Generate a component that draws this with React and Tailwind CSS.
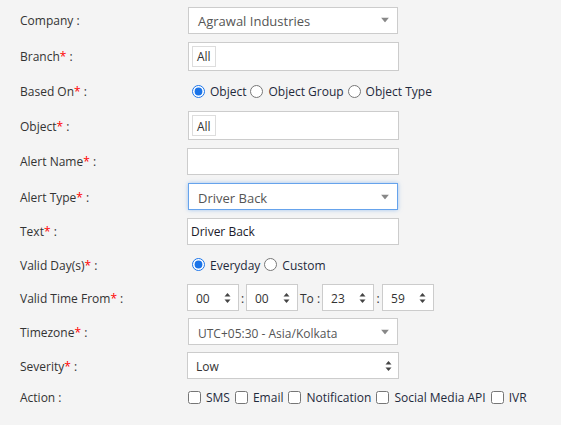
import React from "react";

const Star = () => <span className="text-[#ff0000]">*</span>;

function Caret() {
  return (
    <svg width="8" height="5" viewBox="0 0 8 5" className="absolute right-[8px] top-1/2 -translate-y-1/2">
      <path d="M0 0 L8 0 L4 5 Z" fill="#888" />
    </svg>
  );
}

function Spinner({ right = 8 }) {
  return (
    <svg width="7" height="11" viewBox="0 0 7 11" className="absolute top-1/2 -translate-y-1/2" style={{ right }}>
      <path d="M0.5 4 L3.5 0.5 L6.5 4 Z" fill="#444" />
      <path d="M0.5 7 L3.5 10.5 L6.5 7 Z" fill="#444" />
    </svg>
  );
}

function Row({ h, label, children }) {
  return (
    <div className="flex items-center" style={{ height: h }}>
      <div className="w-[167px] shrink-0 text-[#333] translate-y-[1px]">{label}</div>
      {children}
    </div>
  );
}

function SelectBox({ text, focused, extra = "" }) {
  return (
    <div
      className={`relative w-[210px] h-[27px] bg-white flex items-center pl-[9px] text-[#555] ${
        focused ? "border border-[#66a3ec] shadow-[0_0_4px_rgba(102,163,236,0.6)]" : "border border-[#cccccc]"
      } ${extra}`}
    >
      <span className="translate-y-[1.5px]">{text}</span>
      <Caret />
    </div>
  );
}

function TagBox() {
  return (
    <div className="w-[211px] h-[29px] bg-white border border-[#cccccc] flex items-center pl-[3px]">
      <span className="h-[21px] px-[4px] border border-[#dddddd] flex items-center text-[#333]">
        <span className="translate-y-[1px]">All</span>
      </span>
    </div>
  );
}

function Radio({ checked, label }) {
  return (
    <label className="flex items-center gap-[5px]">
      <input type="radio" readOnly checked={checked} className="w-[13px] h-[13px] m-0 accent-[#1a73e8]" />
      <span className="text-[#1f2a3c] translate-y-[1px]">{label}</span>
    </label>
  );
}

function Check({ label }) {
  return (
    <label className="flex items-center gap-[5px]">
      <input type="checkbox" readOnly className="w-[13px] h-[13px] m-0" />
      <span className="text-[#1f2a3c] translate-y-[1px]">{label}</span>
    </label>
  );
}

function TimeBox({ v }) {
  return (
    <div className="relative w-[52px] h-[27px] bg-white border border-[#cccccc] flex items-center pl-[8px] text-[#333]">
      <span className="translate-y-[1px]">{v}</span>
      <Spinner right={7} />
    </div>
  );
}

export default function App() {
  return (
    <div
      className="w-[561px] h-[425px] bg-[#f4f4f4] pl-[20px] pt-[2px] text-[12px]"
      style={{ fontFamily: '"Open Sans", sans-serif' }}
    >
      <Row h={36} label="Company :">
        <SelectBox text={<span className="text-[13px]">Agrawal Industries</span>} extra="ml-[1px]" />
      </Row>
      <Row h={36} label={<>Branch<Star /> :</>}>
        <div className="ml-[1px]"><TagBox /></div>
      </Row>
      <Row h={34} label={<>Based On<Star /> :</>}>
        <div className="flex items-center gap-[4px] ml-[5px]">
          <Radio checked label="Object" />
          <Radio label="Object Group" />
          <Radio label="Object Type" />
        </div>
      </Row>
      <Row h={35} label={<>Object<Star /> :</>}>
        <div className="ml-[1px]"><TagBox /></div>
      </Row>
      <Row h={36} label={<>Alert Name<Star /> :</>}>
        <div className="w-[212px] h-[27px] bg-white border border-[#cccccc]" />
      </Row>
      <Row h={35} label={<>Alert Type<Star /> :</>}>
        <SelectBox text={<span className="text-[13px]">Driver Back</span>} focused extra="ml-[1px]" />
      </Row>
      <Row h={34} label={<>Text<Star /> :</>}>
        <div className="w-[212px] h-[27px] bg-white border border-[#cccccc] flex items-center pl-[3px] text-[#1a1a2a]">
          <span className="translate-y-[1px]">Driver Back</span>
        </div>
      </Row>
      <Row h={33} label={<>Valid Day(s)<Star /> :</>}>
        <div className="flex items-center gap-[4px] ml-[5px]">
          <Radio checked label="Everyday" />
          <Radio label="Custom" />
        </div>
      </Row>
      <Row h={33} label={<>Valid Time From<Star /> :</>}>
        <div className="flex items-center text-[#333]">
          <TimeBox v="00" />
          <span className="w-[7px] text-center translate-y-[1px]">:</span>
          <TimeBox v="00" />
          <span className="ml-[2px] mr-[2px] translate-y-[1px]">To :</span>
          <TimeBox v="23" />
          <span className="w-[8px] text-center translate-y-[1px]">:</span>
          <TimeBox v="59" />
        </div>
      </Row>
      <Row h={35} label={<>Timezone<Star /> :</>}>
        <SelectBox text="UTC+05:30 - Asia/Kolkata" extra="ml-[1px]" />
      </Row>
      <Row h={33} label={<>Severity<Star /> :</>}>
        <div className="relative w-[212px] h-[27px] bg-white border border-[#cccccc] flex items-center pl-[8px] text-[#333]">
          <span className="translate-y-[1px]">Low</span>
          <Spinner right={6} />
        </div>
      </Row>
      <Row h={30} label="Action :">
        <div className="flex items-center gap-[5px] ml-[1px]">
          <Check label="SMS" />
          <Check label="Email" />
          <Check label="Notification" />
          <Check label="Social Media API" />
          <Check label="IVR" />
        </div>
      </Row>
    </div>
  );
}
